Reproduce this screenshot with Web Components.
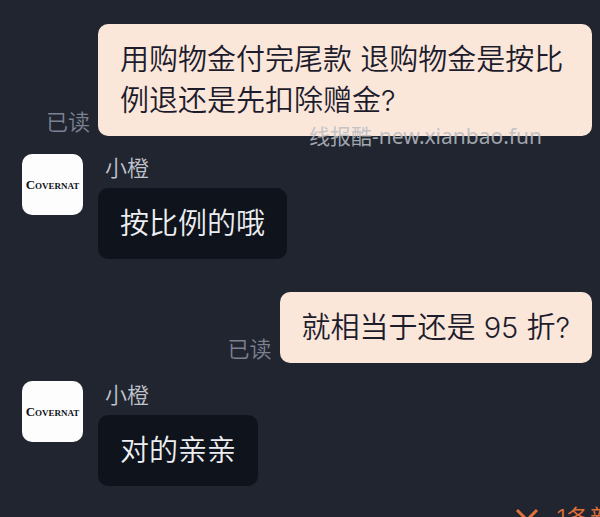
<!DOCTYPE html>
<html lang="zh-CN">
<head>
  <meta charset="UTF-8">
  <meta name="viewport" content="width=device-width, initial-scale=1.0">
  <title>小橙</title>
  <style>
    body {
      margin: 0;
      min-height: 100vh;
      background: #212530;
      font-family: Inter, "Noto Sans CJK SC", sans-serif;
      font-weight: 350;
    }
  </style>
</head>
<body>
  <chat-thread>
    <sent-message status="已读">用购物金付完尾款 退购物金是按比例退还是先扣除赠金?</sent-message>
    <received-message name="小橙" brand="Covernat">按比例的哦</received-message>
    <sent-message status="已读">就相当于还是 95 折?</sent-message>
    <received-message name="小橙" brand="Covernat">对的亲亲</received-message>
    <water-mark slot="overlay">线报酷-new.xianbao.fun</water-mark>
    <new-messages slot="overlay">1条新</new-messages>
  </chat-thread>

  <script>
    class ChatThread extends HTMLElement {
      constructor() {
        super();
        this.attachShadow({ mode: 'open' }).innerHTML = `
          <style>
            :host {
              display: block;
              position: relative;
              min-height: 100vh;
              box-sizing: border-box;
              padding: 24px 8px 24px 22px;
              overflow: hidden;
            }

            main {
              display: flex;
              flex-direction: column;
            }

            ::slotted(received-message) {
              margin-top: 18px;
            }

            ::slotted(sent-message:not(:first-child)) {
              margin-top: 33px;
            }
          </style>
          <main><slot></slot></main>
          <slot name="overlay"></slot>
        `;
      }
    }

    class ChatBubble extends HTMLElement {
      constructor() {
        super();
        this.attachShadow({ mode: 'open' }).innerHTML = `
          <style>
            :host {
              display: block;
              padding: 15px 22px;
              border-radius: 10px;
              background: #0f131b;
              color: #eceef2;
              font-size: 29px;
              line-height: 41px;
            }

            :host([mine]) {
              background: #fbe6da;
              color: #1c1c2c;
            }
          </style>
          <slot></slot>
        `;
      }
    }

    class SentMessage extends HTMLElement {
      connectedCallback() {
        if (this.shadowRoot) return;
        this.attachShadow({ mode: 'open' }).innerHTML = `
          <style>
            :host {
              display: flex;
              justify-content: flex-end;
              align-items: flex-end;
              gap: 8px;
            }

            .status {
              flex: none;
              color: #7b8190;
              font-size: 22px;
              line-height: 28px;
            }

            chat-bubble {
              max-width: 450px;
            }
          </style>
          <span class="status">${this.getAttribute('status') || ''}</span>
          <chat-bubble mine><slot></slot></chat-bubble>
        `;
      }
    }

    class BrandAvatar extends HTMLElement {
      constructor() {
        super();
        this.attachShadow({ mode: 'open' }).innerHTML = `
          <style>
            :host {
              display: flex;
              flex: none;
              align-items: center;
              justify-content: center;
              width: 61px;
              height: 61px;
              border-radius: 10px;
              background: #fdfdfd;
              color: #101318;
              font: bold small-caps 13px/16px "Liberation Serif", serif;
            }
          </style>
          <slot></slot>
        `;
      }
    }

    class ReceivedMessage extends HTMLElement {
      connectedCallback() {
        if (this.shadowRoot) return;
        this.attachShadow({ mode: 'open' }).innerHTML = `
          <style>
            :host {
              display: flex;
              align-items: flex-start;
              gap: 15px;
            }

            .body {
              display: flex;
              flex-direction: column;
              align-items: flex-start;
              gap: 6px;
            }

            .name {
              padding: 0 7px;
              color: #c0c4cd;
              font-size: 22px;
              line-height: 28px;
            }
          </style>
          <brand-avatar>${this.getAttribute('brand') || ''}</brand-avatar>
          <div class="body">
            <span class="name">${this.getAttribute('name') || ''}</span>
            <chat-bubble><slot></slot></chat-bubble>
          </div>
        `;
      }
    }

    class WaterMark extends HTMLElement {
      constructor() {
        super();
        this.attachShadow({ mode: 'open' }).innerHTML = `
          <style>
            :host {
              position: absolute;
              top: 122px;
              right: 58px;
              color: rgba(184, 190, 196, 0.85);
              font: 400 21px/28px "Noto Sans", "Noto Sans CJK SC", sans-serif;
              white-space: nowrap;
              pointer-events: none;
            }
          </style>
          <slot></slot>
        `;
      }
    }

    // Jump button, partly past the lower right corner
    class NewMessages extends HTMLElement {
      constructor() {
        super();
        this.attachShadow({ mode: 'open' }).innerHTML = `
          <style>
            :host {
              position: absolute;
              right: -14px;
              bottom: -18px;
            }

            button {
              display: flex;
              align-items: center;
              gap: 18px;
              padding: 0;
              border: 0;
              background: none;
              color: #e2703a;
              font: inherit;
              font-size: 24px;
              line-height: 32px;
              white-space: nowrap;
            }

            svg {
              display: block;
            }
          </style>
          <button type="button">
            <svg width="24" height="24" viewBox="0 0 24 24" fill="none" stroke="currentColor" stroke-width="3" aria-hidden="true">
              <path d="M2 3l10 10L22 3M2 12l10 10 10-10"/>
            </svg>
            <span><slot></slot></span>
          </button>
        `;
      }
    }

    customElements.define('chat-thread', ChatThread);
    customElements.define('chat-bubble', ChatBubble);
    customElements.define('sent-message', SentMessage);
    customElements.define('brand-avatar', BrandAvatar);
    customElements.define('received-message', ReceivedMessage);
    customElements.define('water-mark', WaterMark);
    customElements.define('new-messages', NewMessages);
  </script>
</body>
</html>
